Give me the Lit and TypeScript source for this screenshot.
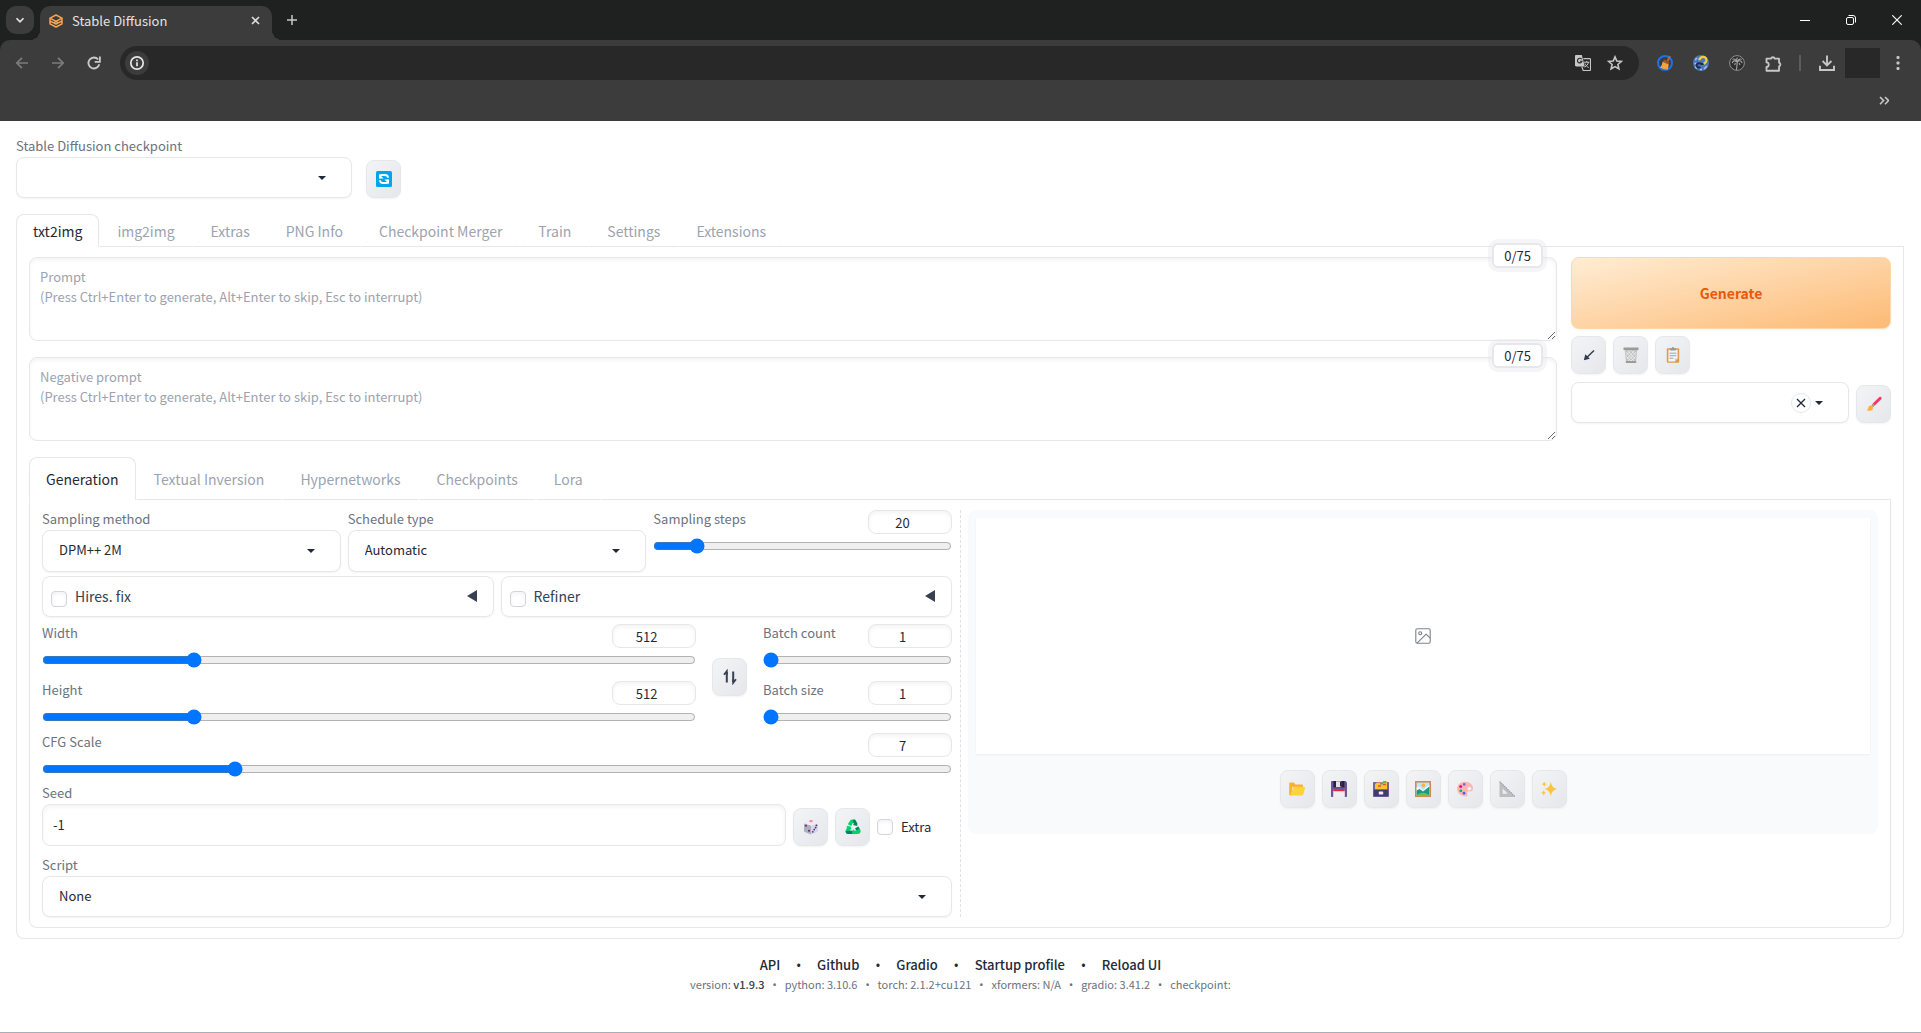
import { LitElement, html, css, svg, nothing, TemplateResult } from "lit";
import { customElement, state } from "lit/decorators.js";

type Glyph = TemplateResult;

const icon = (size: number, body: Glyph, box = "0 0 16 16", cls = "") =>
  html`<svg class=${cls} width=${size} height=${size} viewBox=${box} fill="none" aria-hidden="true">${body}</svg>`;

const glyphs = {
  chevron: svg`<path d="M4 6l4 4 4-4" stroke="#e3e3e3" stroke-width="2"/>`,
  gradio: svg`<g stroke="#f9a352" stroke-width="1.500" stroke-linejoin="round">
      <path d="M7 1l6 3.200L7 7.400 1 4.200z"/>
      <path d="M1 4.200v5.600l6 3.200 6-3.200V4.200M1.200 7l3.300 1.800L7 7.500l2.500 1.300L12.800 7M4.500 8.700L7 10l2.500-1.300"/></g>`,
  tabClose: svg`<path d="M1 1l7 7M8 1L1 8" stroke="#dcdcdc" stroke-width="1.600"/>`,
  plus: svg`<path d="M5 0v10M0 5h10" stroke="#c9c9c9" stroke-width="1.500"/>`,
  minimize: svg`<path d="M0 5.500h10" stroke="#fff" stroke-width="1"/>`,
  restore: svg`<g stroke="#fff"><rect x=".5" y="2.500" width="7" height="7" rx="1.500"/><path d="M2.500.5H7A2.500 2.500 0 0 1 9.500 3v4.500"/></g>`,
  windowClose: svg`<path d="M.3.3l9.400 9.400M9.700.3L.3 9.700" stroke="#fff" stroke-width="1.100"/>`,
  back: svg`<path d="M14 8H3M8 2.800L2.800 8 8 13.200" stroke="#7c7c7c" stroke-width="1.700"/>`,
  forward: svg`<path d="M2 8h11M8 2.800L13.200 8 8 13.200" stroke="#7c7c7c" stroke-width="1.700"/>`,
  reload: svg`<path d="M13.300 9.200A5.500 5.500 0 1 1 12.200 4.500" stroke="#c9c9c9" stroke-width="1.800"/><path d="M13.900 1.600v5.200H8.700" stroke="#c9c9c9" stroke-width="1.800"/>`,
  info: svg`<circle cx="8" cy="8" r="6.200" stroke="#e6e6e6" stroke-width="1.700"/><path d="M8 7.200v4M8 4.600v1.600" stroke="#e6e6e6" stroke-width="1.700"/>`,
  translate: svg`<path d="M0 1.200C0 .5.5 0 1.200 0h5.600l3 11.500H1.200C.5 11.500 0 11 0 10.300z" fill="#c7c7c7"/>
      <path d="M6.600 4.200A2.300 2.300 0 1 0 7 6.200H4.900" stroke="#282828" stroke-width="1.100"/>
      <path d="M8.300 3.600h6.200c.6 0 1 .4 1 1v9.900c0 .6-.4 1-1 1H8.200l-1.400-4" stroke="#c7c7c7" stroke-width="1.100"/>
      <path d="M9 7.200h5.400M11.700 6v1.200M13.500 7.200c-.5 2.300-2 4-4 5M10 8.400c.8 2 2 3.200 3.700 4.200" stroke="#c7c7c7"/>`,
  star: svg`<path d="M8 1.900l1.800 4.200 4.500.4-3.400 3 1 4.400L8 11.600l-3.900 2.300 1-4.400-3.400-3 4.500-.4z" stroke="#c7c7c7" stroke-width="1.600"/>`,
  broom: svg`<circle cx="8" cy="8" r="7" stroke="#1a73e8" stroke-width="2"/><path d="M12.400.8l1.400.7-2.400 5-1.800-1z" fill="#c8662b"/><path d="M7.400 4.600l5 2.600-.6 2.400-6.200-2.800z" fill="#a5532a"/><path d="M5.600 6.800l6.200 2.800-.9 4.800c-2.600.4-5.400-.3-8-1.800C4.600 11 5.200 9 5.600 6.800z" fill="#f2a33c"/>`,
  snake: svg`<circle cx="8" cy="8" r="8" fill="#4a76bd"/><path d="M2 5l2-2M2 12l2 1.500M11 14l3-3M1.500 8.500h2M7 14.500h2" stroke="#a9c3ea" stroke-width="1.400"/>
      <path d="M6.400 5.200C6.600 2 11.200.8 13 3.400c1.600 2.600-.8 4.800-3 5.800" stroke="#f7cf2b" stroke-width="2.200"/><path d="M10.600 8.800C8.200 9.800 6 6.800 4.200 8.800c-1.600 2 .6 4.600 3.400 3.400" stroke="#1d2b46" stroke-width="2"/>`,
  palm: svg`<circle cx="8" cy="8" r="7.400" stroke="#8f8f8f" fill="#2e2e2e"/><path d="M8.200 7c-.2 2.600-.2 5-.8 7.800M8.200 7.200C6 5 4 5.600 3.200 8.200M8.200 7C6.600 4.400 5 3.400 3.400 4.400M8.200 7c2-2 4.200-1.600 5 1.200M8.200 7c1.400-2.600 3-3.600 4.600-2.600M8.200 7C7.400 4.800 7.600 3.400 8.600 2.600M6.400 8L5.600 10M10 8l1 2" stroke="#a5a5a5" stroke-width="1.100"/>`,
  puzzle: svg`<path d="M1.400 3.400h4.200a1.900 1.900 0 0 1 3.600 0h4v3.800a1.900 1.900 0 0 1 0 3.600v4H1.400v-3.600a2 2 0 0 0 0-4.200z" stroke="#c7c7c7" stroke-width="1.700" stroke-linejoin="round"/>`,
  download: svg`<path d="M8 .5v9.500M3.600 6L8 10.400 12.400 6" stroke="#c7c7c7" stroke-width="1.900"/><path d="M1 10.800V15h14v-4.200" stroke="#c7c7c7" stroke-width="1.900"/>`,
  more: svg`<g fill="#c7c7c7"><rect x="6.500" y="1" width="3" height="3" rx="1"/><rect x="6.500" y="6.500" width="3" height="3" rx="1"/><rect x="6.500" y="12" width="3" height="3" rx="1"/></g>`,
  overflow: svg`<path d="M1 1l3.600 3.600L1 8.200M6 1l3.600 3.600L6 8.200" stroke="#c7c7c7" stroke-width="1.600"/>`,
  refresh: svg`<rect width="16" height="16" rx="1.500" fill="#00a6ed"/><path d="M4 7.200V5.600c0-1 .6-1.600 1.600-1.600H9c1.800 0 3 1 3 2.800M12 8.800v1.600c0 1-.6 1.600-1.600 1.600H7c-1.800 0-3-1-3-2.800" stroke="#fff" stroke-width="1.800"/><path d="M3 3v4.600h4.600zM13 13V8.400H8.400z" fill="#fff"/>`,
  arrow: svg`<path d="M13 3.500L5 11.200" stroke="#2f3a4d" stroke-width="1.400"/><path d="M2.800 13.200l1.500-6 4.500 4.600z" fill="#2f3a4d"/>`,
  bin: svg`<path d="M1.600 2h12.800L13 15H3z" fill="#c3c3c3"/><path d="M3 5l8 9M3 9l5 5M5 4l7 8M8.500 4l4.500 4M13 5l-8 9M13 9l-5 5M11 4l-7 8M7.500 4L3 8" stroke="#eee" stroke-width=".8"/><path d="M.5.600h15v2.400H.5zM2.800 14h10.400v2H2.800z" fill="#9b9b9b"/>`,
  clipboard: svg`<rect x="1.800" y="1.200" width="12.400" height="14.600" rx="1" fill="#e39a45"/><path d="M3.400 2.800h9.200v8.600l-2.800 3H3.400z" fill="#f4f4f6"/><path d="M5.600 1.200h1.200a1.200 1.200 0 0 1 2.400 0h1.200c.4 0 .6.200.6.600v1.800H5V1.800c0-.4.200-.6.600-.6z" fill="#9b9b9b"/><path d="M4.600 6.200h6.800M4.600 8.700h6.800M4.600 11.200h3.800" stroke="#9fa0ad"/><path d="M9.800 11.400h2.800l-2.800 3z" fill="#c8cad6"/>`,
  brush: svg`<path d="M6.800 7.600L12.800 1.400c.7-.7 1.800-.8 2.400-.2.600.7.500 1.700-.2 2.400L8.800 9.600z" fill="#f8365f"/><path d="M5.400 9.300L6.800 7.600l2 2-1.500 1.700z" fill="#9b9b9b"/><path d="M1 14.600c1.200-1 .8-4.500 3.600-5.100 1.600-.2 2.800 1.200 2.400 2.700-.5 2.200-3 3.200-6 2.400z" fill="#ffb02e"/>`,
  swap: svg`<path d="M4.800 13.500V3M11.200 2.500V13" stroke="#374151" stroke-width="2"/><path d="M2 5.800l2.800-3.600v3.600M14 10.200l-2.800 3.600v-3.600" stroke="#374151" stroke-width="1.800"/>`,
  dice: svg`<path d="M1 4.200l7 2.200v9L1.800 13c-.5-.2-.8-.6-.8-1.200z" fill="#b4acbc"/><path d="M15 4.200L8 6.400v9l6.200-2.400c.5-.2.800-.6.800-1.200z" fill="#dcd3ea"/><path d="M1 4.200L8 1l7 3.200L8 6.400z" fill="#f0eaf6"/><ellipse cx="8" cy="2.200" rx="1.900" ry="1.100" fill="#f8899b"/><g fill="#3f3a68"><circle cx="3" cy="6.800" r="1"/><circle cx="6" cy="11.800" r="1"/><circle cx="13.400" cy="6.400" r=".9"/><circle cx="12.600" cy="8.600" r=".9"/><circle cx="11.200" cy="10.600" r=".9"/><circle cx="9.800" cy="12.800" r=".9"/></g>`,
  recycle: svg`<path d="M5.200 1.400C6 .300 9.400.200 10.400 1.200L8.600 4.600 7.900 4 6.200 7 2.800 5.200z" fill="#00d26a"/><path d="M9 .6c1.200 0 1.600.600 2 1.400l1.400 2.400-.2 2.600-4.200-1 1-1.200-1.400-3z" fill="#008463"/><path d="M1.600 7l4 .6.800 1.600-1.600 2.600h2.800V15H3.400C.8 15 0 12.600.8 11l1.200-2.200z" fill="#00d26a"/><path d="M.6 12.200l4-.4h3V15H3.400c-1.600 0-2.600-1.200-2.800-2.800z" fill="#008463"/><path d="M8.800 10l.2 1.600h2.400L10.200 9.400l3-1.800 2.200 3.400c.8 2-.6 4-2.600 4H9.200v1l-2.200-3z" fill="#00d26a"/><path d="M10.200 9.400l3-1.800 1.400 2.200-3.200 1.800z" fill="#008463"/>`,
  folder: svg`<path d="M.2 2.600C.2 2 .600 1.600 1.200 1.600h3.600l1.800 1.800h6.200c.7 0 1.200.5 1.200 1.200V6H3.400l-1.200 8.400H1.400C.700 14.400.200 14 .200 13.200z" fill="#ffb02e"/><path d="M4.400 5.800h10.400c.9 0 1.400.7 1.200 1.500l-1.600 6c-.2.700-.8 1.100-1.400 1.100H1.600z" fill="#ffd23e"/>`,
  floppy: svg`<path d="M1 0h13.600L16 1.400V15c0 .6-.4 1-1 1H1c-.6 0-1-.4-1-1V1c0-.6.400-1 1-1z" fill="#6a569a"/><path d="M2.400 0h11v6.400h-11z" fill="#321b41"/><path d="M5 .3h5.200v5.800H5z" fill="#e3e3ea"/><path d="M9 .8h1.400v4.800H9z" fill="#321b41"/><path d="M2.200 8h11.600v8H2.200z" fill="#f0edf5"/><path d="M2.200 8h11.600v2.200H2.200z" fill="#e02c3c"/>`,
  cabinet: svg`<path d="M0 2c0-.6.400-1 1-1h14c.6 0 1 .4 1 1v13c0 .6-.4 1-1 1H1c-.6 0-1-.4-1-1z" fill="#77649e"/><path d="M2 3l2-1.600h6L11 .2h3v8H2z" fill="#ffc02e"/><path d="M10 .2h3.200v1.600H10z" fill="#12c77b"/><path d="M5 5h3M10 3.500h3" stroke="#e0523a" stroke-width="1.400"/><path d="M7 2.800h3" stroke="#1e9ad6" stroke-width="1.200"/><path d="M.8 8.800h14.400v6.400H.8z" fill="#433b6b"/><rect x="5.800" y="10.600" width="4.400" height="2.800" rx=".5" fill="#f3eef8"/>`,
  picture: svg`<rect width="16" height="16" fill="#cd8b4f"/><path d="M1.600 1.600h12.800v12.800H1.600z" fill="#bfe3fb"/><circle cx="8.400" cy="4.400" r="1.800" fill="#f5b23c"/><path d="M1.600 6.600c2-2 4-.8 5 1.400l1.800 1 2.600-3 3.400-2v10.400H1.600z" fill="#eef7fd"/><path d="M1.600 9.400l3-1.400 3.400 2.600 6.400-5v8.800H1.600z" fill="#189a83"/><path d="M1.600 14.400c3-3.400 9.600-3.400 12.800 0z" fill="#6cc04a"/>`,
  palette: svg`<path d="M7.200.8C11.800.4 15.900 3.300 16 7.200c0 2.600-1.800 3.700-3.800 3.200-1.600-.4-2.600.6-2.100 2 .5 1.500.4 2.900-1.300 2.900C4 15.300.3 12.200.2 8 .2 4.200 3.200 1.100 7.200.800z" fill="#ffb5b0"/><circle cx="12.400" cy="7.600" r="1.900" fill="#f1f2f5"/><circle cx="7.200" cy="3.400" r="1.400" fill="#8d65c5"/><circle cx="3.700" cy="5.600" r="1.500" fill="#f70a8d"/><circle cx="3.800" cy="9.800" r="1.400" fill="#00b36a"/><circle cx="7" cy="12.200" r="1.400" fill="#3f5fff"/>`,
  ruler: svg`<path d="M.5 0L16 15.200v.8H1.200c-.4 0-.7-.3-.7-.7zM3.600 7.600v5.200h5.200z" fill="#bebebe" fill-rule="evenodd"/><path d="M.8.600l14.800 14.600" stroke="#9b8fb0" stroke-width="1.200" stroke-dasharray="1 1.200"/>`,
  sparkles: svg`<g fill="#fcc43c"><path d="M9.800.8c1 4.400 2 6.100 6.200 7.200-4.200 1.100-5.200 2.900-6.200 7.200C8.800 10.900 7.800 9.100 3.600 8c4.200-1.100 5.200-2.800 6.200-7.200z"/><path d="M3.200.6c.5 1.700 1 2.200 2.500 2.600-1.500.4-2 .9-2.500 2.600C2.700 4.100 2.200 3.600.7 3.200 2.200 2.800 2.700 2.300 3.200.6zM2.600 9c.5 1.800 1.100 2.400 2.700 2.800-1.600.4-2.200 1-2.700 2.800-.5-1.800-1.100-2.400-2.600-2.800C1.500 11.400 2.100 10.800 2.600 9z"/></g>`,
  image: svg`<g stroke="#7b828e" stroke-width="1.100" stroke-linejoin="round"><rect x=".8" y=".8" width="14.400" height="14.400" rx="1.400"/><circle cx="5.200" cy="5.200" r="1.500"/><path d="M15.200 10.200l-4.100-4.100-9 9"/></g>`,
  cross: svg`<path d="M1 1l8 8M9 1L1 9" stroke="#1f2937" stroke-width="1.300"/>`,
};

const caret = html`<svg class="caret" width="8" height="4" viewBox="0 0 8 4" aria-hidden="true"><path d="M0 0h8L4 4z" fill="#1f2937" /></svg>`;

interface SliderSpec {
  id: string;
  label: string;
  min: number;
  max: number;
  step: number;
}

@customElement("app-root")
export class AppRoot extends LitElement {
  @state() private values: Record<string, number> = {
    steps: 20,
    width: 512,
    height: 512,
    count: 1,
    size: 1,
    cfg: 7,
  };
  @state() private mainTab = "txt2img";
  @state() private subTab = "Generation";

  static styles = css`
    :host {
      display: flex;
      flex-direction: column;
      box-sizing: border-box;
      min-height: 100vh;
      background: #fff;
      border-bottom: 1px solid #a8adb8;
      color: #1f2937;
      font: 400 13px/20px "Noto Sans CJK SC", "Source Sans Pro", "Noto Sans", sans-serif;
    }
    *, *::before, *::after { box-sizing: border-box; }
    button, input, select, textarea { font: inherit; color: inherit; margin: 0; }
    button { padding: 0; border: 0; background: none; cursor: pointer; }
    svg { display: block; flex: none; }

    /* browser frame */
    .strip { display: flex; height: 40px; padding: 6px 1px 0 6px; background: #1f2120; align-items: stretch; }
    .search-tabs { display: grid; place-items: center; width: 28px; height: 28px; border-radius: 10px; background: #3c3c3c; }
    .browser-tab { position: relative; display: flex; align-items: center; gap: 9px; width: 232px; margin-left: 6px; padding: 0 12px 5px 9px; background: #3c3c3c; border-radius: 10px 10px 0 0; color: #e3e3e3; line-height: 18px; }
    .browser-tab::before, .browser-tab::after { content: ""; position: absolute; bottom: 0; width: 10px; height: 10px; }
    .browser-tab::before { left: -10px; background: radial-gradient(circle at 0 0, transparent 10px, #3c3c3c 10px); }
    .browser-tab::after { right: -10px; background: radial-gradient(circle at 100% 0, transparent 10px, #3c3c3c 10px); }
    .browser-title { flex: 1; }
    .new-tab { display: grid; place-items: center; width: 40px; height: 28px; }
    .window-buttons { display: flex; margin-left: auto; height: 28px; }
    .window-buttons button { display: grid; place-items: center; width: 46px; }
    .chrome { background: #1f2120; }
    .toolbar { display: flex; align-items: center; height: 40px; padding: 0 5px 0 4px; background: #3c3c3c; border-radius: 10px 10px 0 0; }
    .nav-button { display: grid; place-items: center; width: 36px; height: 34px; margin-top: 6px; }
    .address { display: flex; align-items: center; flex: 1; height: 34px; margin: 6px 8px 0 8px; padding: 0 16px 0 5px; border-radius: 17px; background: #282828; }
    .address input { flex: 1; min-width: 0; border: 0; outline: 0; background: none; color: #e3e3e3; }
    .site-info { display: grid; place-items: center; width: 24px; height: 24px; border-radius: 12px; background: #3c3c3c; }
    .address .end { display: flex; gap: 16px; }
    .divider { width: 2px; height: 16px; margin: 6px 8px 0 8px; background: #5c5c5c; }
    .profile { width: 35px; height: 30px; margin-top: 6px; background: #282828; }
    .bookmarks { display: flex; justify-content: flex-end; align-items: center; height: 41px; padding-right: 32px; background: #3c3c3c; }

    /* page */
    main { padding: 16px 17px 0 16px; }
    .label { display: block; height: 20px; color: #6b7280; line-height: 18px; white-space: nowrap; }
    .quick { display: flex; align-items: flex-end; gap: 14px; margin-bottom: 16px; }
    .quick .field { width: 336px; }
    .field { min-width: 0; }
    .picker { display: grid; grid-template-columns: minmax(0, 1fr) auto auto; align-items: center; gap: 4px; height: 41px; padding-right: 25px; border: 1px solid #e5e7eb; border-radius: 8px; background: #fff; box-shadow: 0 1px 2px rgba(0, 0, 0, 0.05); }
    .picker.tall { height: 42px; }
    .picker select { grid-area: 1 / 1 / 2 / 4; width: calc(100% + 25px); height: 39px; padding: 0 16px 2px; border: 0; border-radius: 8px; background: none; appearance: none; }
    .caret { grid-area: 1 / 3; pointer-events: none; }
    .clear { grid-area: 1 / 2; z-index: 1; display: grid; place-items: center; width: 20px; height: 20px; border: 1px solid #e5e7eb; border-radius: 10px; }
    .tool { display: grid; place-items: center; flex: none; width: 35px; height: 38px; border: 1px solid #e5e7eb; border-radius: 8px; background: linear-gradient(to bottom right, #f3f4f6, #e5e7eb); box-shadow: 0 1px 2px rgba(0, 0, 0, 0.05); }

    .tabs { display: flex; height: 33px; }
    .tabs.sub { height: 43px; }
    .tabs::after { content: ""; flex: 1; border-bottom: 1px solid #e5e7eb; }
    .tab { padding: 0 17px; border: 1px solid transparent; border-bottom-color: #e5e7eb; border-radius: 8px 8px 0 0; color: #9ca3af; font-size: 14px; white-space: nowrap; }
    .tab:not(.on) { border-radius: 0; }
    .tab.on { border-color: #e5e7eb; border-bottom-color: #fff; color: #1f2937; }
    .tab.on { padding: 0 16px; }
    .panel { padding: 10px 12px; border: 1px solid #e5e7eb; border-top: 0; border-radius: 0 0 8px 8px; }

    .top { display: grid; grid-template-columns: minmax(0, 1fr) 320px; gap: 14px; margin-bottom: 16px; }
    .prompts { display: flex; flex-direction: column; gap: 16px; }
    .prompt { position: relative; display: flex; }
    .prompt textarea { flex: 1; height: 84px; padding: 9px 10px; border: 1px solid #e5e7eb; border-radius: 8px; outline: 0; background: #fff; box-shadow: inset 0 2px 4px rgba(0, 0, 0, 0.05); resize: vertical; line-height: 20px; }
    textarea::placeholder { color: #9ca3af; }
    .counter { position: absolute; top: -14px; right: 14px; padding: 0 10px; border: 2px solid #e5e7eb; border-radius: 6px; background: #fff; box-shadow: 0 0 0 4px rgba(229, 231, 235, 0.4); line-height: 21px; }
    .generate { width: 100%; height: 72px; margin-bottom: 7px; border: 1px solid #fed7aa; border-radius: 8px; background: linear-gradient(to bottom right, #ffedd5, #fdba74); box-shadow: 0 1px 2px rgba(0, 0, 0, 0.05); color: #ea580c; font-size: 14px; font-weight: 700; }
    .row { display: flex; align-items: flex-end; gap: 7px; }
    .row .field { flex: 1; }
    .actions .tools { margin-bottom: 8px; }

    .split { display: grid; grid-template-columns: minmax(0, 1fr) 16px minmax(0, 1fr); align-items: start; }
    .handle { align-self: stretch; justify-self: center; border-left: 1px dashed #dfe1e6; }
    .cols { display: grid; gap: 7px; align-items: start; }
    .three { grid-template-columns: repeat(3, minmax(0, 1fr)); margin-bottom: 4px; }
    .two { grid-template-columns: repeat(2, minmax(0, 1fr)); margin-bottom: 7px; }
    .dims { display: grid; grid-template-columns: minmax(0, 45fr) 35px minmax(0, 13fr); gap: 16px; align-items: center; margin-bottom: 4px; }
    .stack { display: flex; flex-direction: column; gap: 13px; padding-bottom: 4px; }
    .slider-head { display: flex; justify-content: space-between; align-items: flex-start; height: 24px; margin-bottom: 4px; }
    .slider-head input { width: 84px; height: 24px; padding: 0 8px; border: 1px solid #e5e7eb; border-radius: 8px; outline: 0; background: #fff; box-shadow: inset 0 2px 4px rgba(0, 0, 0, 0.05); text-align: center; }
    input::-webkit-inner-spin-button { opacity: 0; }
    input[type="range"] { display: block; width: 100%; height: 16px; accent-color: #0075ff; }
    .accordion { display: flex; align-items: center; justify-content: space-between; height: 41px; padding: 0 16px 2px 8px; border: 1px solid #e5e7eb; border-radius: 8px; box-shadow: 0 1px 2px rgba(0, 0, 0, 0.05); }
    .check { display: flex; align-items: center; gap: 8px; }
    .check input { flex: none; width: 16px; height: 16px; border: 1px solid #d1d5db; border-radius: 4px; background: #fff; box-shadow: inset 0 2px 4px rgba(0, 0, 0, 0.05); appearance: none; }
    .check input:checked { background: #0075ff; }
    .accordion .check { color: #374151; font-size: 14px; }
    .accordion .check input { margin-top: 6px; }
    .seed { margin: 7px 0 10px; }
    .seed .number { display: block; width: 100%; height: 42px; padding: 0 10px 2px; border: 1px solid #e5e7eb; border-radius: 8px; outline: 0; background: #fff; box-shadow: inset 0 2px 4px rgba(0, 0, 0, 0.05); }
    .seed .check { width: 75px; height: 38px; }

    .gallery { padding: 8px 8px 26px; border-radius: 8px; background: #f9fafc; }
    .preview { display: grid; place-items: center; height: 236px; margin-bottom: 16px; background: #fff; box-shadow: 0 1px 2px rgba(0, 0, 0, 0.05); }
    .gallery .row { justify-content: center; }

    footer { padding: 16px 0; text-align: center; }
    .links, .versions { display: flex; justify-content: center; }
    .links { gap: 16px; font-weight: 500; }
    .links a { color: inherit; text-decoration: none; }
    .dot { font-family: "Noto Sans", sans-serif; }
    .versions { gap: 8px; color: #6b7280; font-size: 11px; line-height: 19px; }
    .versions b { color: #374151; font-weight: 500; }
  `;

  private setValue(id: string, e: Event) {
    this.values = { ...this.values, [id]: Number((e.target as HTMLInputElement).value) };
  }

  private picker(id: string, label: string, options: string[], tall = false, clearable = false) {
    return html`<div class="field">
      ${clearable ? nothing : html`<label class="label" for=${id}>${label}</label>`}
      <div class="picker ${tall ? "tall" : ""}">
        <select id=${id} aria-label=${label}>${options.map((o) => html`<option>${o}</option>`)}</select>
        ${clearable ? html`<button class="clear" aria-label="Clear">${icon(10, glyphs.cross, "0 0 10 10")}</button>` : nothing}
        ${caret}
      </div>
    </div>`;
  }

  private slider({ id, label, min, max, step }: SliderSpec) {
    const value = this.values[id];
    const onInput = (e: Event) => this.setValue(id, e);
    return html`<div>
      <div class="slider-head">
        <label class="label" for=${id}>${label}</label>
        <input id=${id} type="number" min=${min} max=${max} step=${step} .value=${String(value)} @input=${onInput} />
      </div>
      <input type="range" aria-label=${label} min=${min} max=${max} step=${step} .value=${String(value)} @input=${onInput} />
    </div>`;
  }

  private tool(name: string, glyph: Glyph) {
    return html`<button class="tool" aria-label=${name}>${icon(16, glyph)}</button>`;
  }

  private prompt(title: string) {
    const hint = `${title}\n(Press Ctrl+Enter to generate, Alt+Enter to skip, Esc to interrupt)`;
    return html`<div class="prompt">
      <textarea aria-label=${title} placeholder=${hint}></textarea>
      <span class="counter">0/75</span>
    </div>`;
  }

  private accordion(id: string, label: string) {
    return html`<div class="accordion">
      <label class="check" for=${id}><input id=${id} type="checkbox" />${label}</label>
      <button aria-label="Expand ${label}">
        <svg width="10" height="12" viewBox="0 0 10 12"><path d="M10 0v12L0 6z" fill="#374151" /></svg>
      </button>
    </div>`;
  }

  private tabs(names: string[], current: string, pick: (n: string) => void, cls = "") {
    return html`<div class="tabs ${cls}" role="tablist">
      ${names.map(
        (n) => html`<button class="tab ${n === current ? "on" : ""}" role="tab" aria-selected=${n === current} @click=${() => pick(n)}>${n}</button>`
      )}
    </div>`;
  }

  private browserFrame() {
    return html`<header class="chrome">
      <div class="strip">
        <button class="search-tabs" aria-label="Search tabs">${icon(14, glyphs.chevron)}</button>
        <div class="browser-tab">
          ${icon(14, glyphs.gradio, "0 0 14 14")}
          <span class="browser-title">Stable Diffusion</span>
          <button aria-label="Close tab">${icon(9, glyphs.tabClose, "0 0 9 9")}</button>
        </div>
        <button class="new-tab" aria-label="New tab">${icon(10, glyphs.plus, "0 0 10 10")}</button>
        <div class="window-buttons">
          <button aria-label="Minimize">${icon(10, glyphs.minimize, "0 0 10 10")}</button>
          <button aria-label="Restore">${icon(10, glyphs.restore, "0 0 10 10")}</button>
          <button aria-label="Close">${icon(10, glyphs.windowClose, "0 0 10 10")}</button>
        </div>
      </div>
      <div class="toolbar">
        <button class="nav-button" aria-label="Back">${icon(16, glyphs.back)}</button>
        <button class="nav-button" aria-label="Forward">${icon(16, glyphs.forward)}</button>
        <button class="nav-button" aria-label="Reload">${icon(16, glyphs.reload)}</button>
        <div class="address">
          <button class="site-info" aria-label="Site information">${icon(16, glyphs.info)}</button>
          <input type="text" aria-label="Address" />
          <div class="end">
            <button aria-label="Translate">${icon(16, glyphs.translate)}</button>
            <button aria-label="Bookmark">${icon(16, glyphs.star)}</button>
          </div>
        </div>
        <button class="nav-button" aria-label="Cleaner">${icon(16, glyphs.broom)}</button>
        <button class="nav-button" aria-label="Scripts">${icon(16, glyphs.snake)}</button>
        <button class="nav-button" aria-label="Palm">${icon(16, glyphs.palm)}</button>
        <button class="nav-button" aria-label="Extensions">${icon(17, glyphs.puzzle)}</button>
        <span class="divider"></span>
        <button class="nav-button" aria-label="Downloads">${icon(16, glyphs.download)}</button>
        <span class="profile"></span>
        <button class="nav-button" aria-label="Menu">${icon(16, glyphs.more)}</button>
      </div>
      <div class="bookmarks">
        <button aria-label="More bookmarks">${icon(10, glyphs.overflow, "0 0 10 10")}</button>
      </div>
    </header>`;
  }

  private generation() {
    return html`<div class="split">
      <div>
        <div class="cols three">
          ${this.picker("sampler", "Sampling method", ["DPM++ 2M"], true)}
          ${this.picker("schedule", "Schedule type", ["Automatic"], true)}
          ${this.slider({ id: "steps", label: "Sampling steps", min: 1, max: 150, step: 1 })}
        </div>
        <div class="cols two">${this.accordion("hires", "Hires. fix")} ${this.accordion("refiner", "Refiner")}</div>
        <div class="dims">
          <div class="stack">
            ${this.slider({ id: "width", label: "Width", min: 64, max: 2048, step: 8 })}
            ${this.slider({ id: "height", label: "Height", min: 64, max: 2048, step: 8 })}
          </div>
          ${this.tool("Switch width and height", glyphs.swap)}
          <div class="stack">
            ${this.slider({ id: "count", label: "Batch count", min: 1, max: 100, step: 1 })}
            ${this.slider({ id: "size", label: "Batch size", min: 1, max: 8, step: 1 })}
          </div>
        </div>
        ${this.slider({ id: "cfg", label: "CFG Scale", min: 1, max: 30, step: 1 })}
        <div class="row seed">
          <div class="field">
            <label class="label" for="seed">Seed</label>
            <input class="number" id="seed" type="number" value="-1" />
          </div>
          ${this.tool("Random seed", glyphs.dice)} ${this.tool("Reuse seed", glyphs.recycle)}
          <label class="check" for="extra"><input id="extra" type="checkbox" />Extra</label>
        </div>
        ${this.picker("script", "Script", ["None"])}
      </div>
      <div class="handle"></div>
      <div class="gallery">
        <div class="preview">${icon(16, glyphs.image)}</div>
        <div class="row">
          ${this.tool("Open output folder", glyphs.folder)} ${this.tool("Save image", glyphs.floppy)}
          ${this.tool("Save zip", glyphs.cabinet)} ${this.tool("Send to img2img", glyphs.picture)}
          ${this.tool("Send to inpaint", glyphs.palette)} ${this.tool("Send to extras", glyphs.ruler)}
          ${this.tool("Upscale", glyphs.sparkles)}
        </div>
      </div>
    </div>`;
  }

  render() {
    const links = ["API", "Github", "Gradio", "Startup profile", "Reload UI"];
    const versions = ["python: 3.10.6", "torch: 2.1.2+cu121", "xformers: N/A", "gradio: 3.41.2", "checkpoint:"];
    return html`${this.browserFrame()}
      <main>
        <div class="quick">
          ${this.picker("checkpoint", "Stable Diffusion checkpoint", [""])}
          ${this.tool("Refresh checkpoints", glyphs.refresh)}
        </div>
        ${this.tabs(
          ["txt2img", "img2img", "Extras", "PNG Info", "Checkpoint Merger", "Train", "Settings", "Extensions"],
          this.mainTab,
          (n) => (this.mainTab = n)
        )}
        <div class="panel">
          <div class="top">
            <div class="prompts">${this.prompt("Prompt")} ${this.prompt("Negative prompt")}</div>
            <div class="actions">
              <button class="generate">Generate</button>
              <div class="row tools">
                ${this.tool("Read parameters", glyphs.arrow)} ${this.tool("Clear prompt", glyphs.bin)}
                ${this.tool("Apply styles", glyphs.clipboard)}
              </div>
              <div class="row">
                ${this.picker("styles", "Styles", [""], false, true)} ${this.tool("Edit styles", glyphs.brush)}
              </div>
            </div>
          </div>
          ${this.tabs(
            ["Generation", "Textual Inversion", "Hypernetworks", "Checkpoints", "Lora"],
            this.subTab,
            (n) => (this.subTab = n),
            "sub"
          )}
          <div class="panel">${this.generation()}</div>
        </div>
      </main>
      <footer>
        <div class="links">
          ${links.map((l, i) => html`${i ? html`<span class="dot">•</span>` : nothing}<a href="#">${l}</a>`)}
        </div>
        <div class="versions">
          <span>version: <b>v1.9.3</b></span>
          ${versions.map((v) => html`<span class="dot">•</span><span>${v}</span>`)}
        </div>
      </footer>`;
  }
}
